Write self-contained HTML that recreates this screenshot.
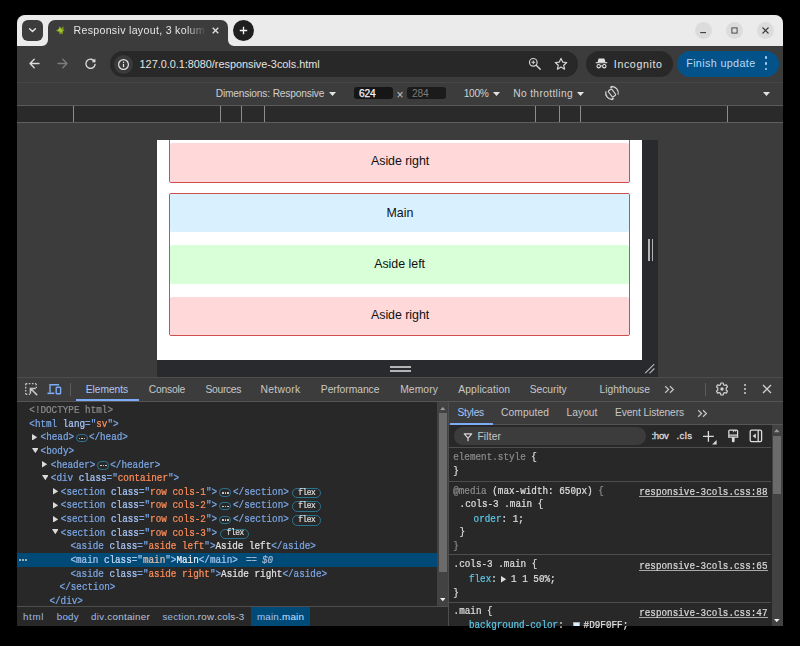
<!DOCTYPE html>
<html lang="en"><head><meta charset="utf-8"><title>Responsiv layout, 3 kolumner</title>
<style>
html,body{margin:0;padding:0;background:#000;}
body{width:800px;height:646px;position:relative;overflow:hidden;font-family:"Liberation Sans", sans-serif;}
#win{position:absolute;left:0;top:0;width:800px;height:646px;}
#win div,#win span,#win svg{position:absolute;}
#win span{white-space:pre;font-kerning:none;}
.s{font-family:"Liberation Sans", sans-serif;}
.m{font-family:"Liberation Mono", monospace;transform:scaleY(1.1);transform-origin:50% 52%;-webkit-text-stroke:0.22px;}
</style></head><body>
<div id="win">
<div style="left:17px;top:15px;width:766px;height:611px;background:#3c3c3c;border-radius:8px 8px 0 0;"></div>
<div style="left:17px;top:15px;width:766px;height:31px;background:#ebebeb;border-radius:8px 8px 0 0;"></div>
<div style="left:22px;top:20px;width:21px;height:21px;background:#3c3c3c;border-radius:6px;"></div>
<svg style="left:27px;top:26px" width="11" height="9" viewBox="0 0 11 9"><path d="M2.6 2.8 L5.5 5.6 L8.4 2.8" fill="none" stroke="#e6e6e6" stroke-width="1.4" stroke-linecap="round" stroke-linejoin="round"/></svg>
<div style="left:48.4px;top:20px;width:179.6px;height:26px;background:#3c3c3c;border-radius:7px 7px 0 0;"></div>
<svg style="left:42.4px;top:40px" width="6" height="6" viewBox="0 0 6 6"><path d="M6 0 V6 H0 A6 6 0 0 0 6 0Z" fill="#3c3c3c"/></svg>
<svg style="left:228px;top:40px" width="6" height="6" viewBox="0 0 6 6"><path d="M0 0 V6 H6 A6 6 0 0 1 0 0Z" fill="#3c3c3c"/></svg>
<svg style="left:54.6px;top:25.4px" width="11" height="11" viewBox="0 0 11 11"><path d="M4.6 0.9 L6.1 3.2 L8.6 1.2 L8.3 4.2 L9.6 5.2 L8 6.4 L7.6 9.4 L5.9 8.6 L4.4 9.6 L4.2 7.2 L0.6 5.3 L3.6 4.4Z" fill="#7d9a1c"/><path d="M4.8 2.6 L6.3 4.4 L7.6 5.6 L6.2 7.4 L4.6 6.2 L2.6 5.2Z" fill="#a9c73a"/></svg>
<svg style="left:211.4px;top:26.1px" width="9" height="9" viewBox="0 0 9 9"><path d="M1.7 1.7 L7.3 7.3 M7.3 1.7 L1.7 7.3" stroke="#e3e3e3" stroke-width="1.25"/></svg>
<div style="left:233px;top:20px;width:21px;height:21px;background:#1f1f1f;border-radius:50%;"></div>
<svg style="left:238.2px;top:25.1px" width="11" height="11" viewBox="0 0 11 11"><path d="M5.5 1.8 V9.2 M1.8 5.5 H9.2" stroke="#f2f2f2" stroke-width="1.35"/></svg>
<div style="left:694.5px;top:22px;width:17px;height:17px;background:#dcdcdc;border-radius:50%;"></div>
<div style="left:725.5px;top:22px;width:17px;height:17px;background:#dcdcdc;border-radius:50%;"></div>
<div style="left:756.5px;top:22px;width:17px;height:17px;background:#dcdcdc;border-radius:50%;"></div>
<svg style="left:699px;top:26px" width="9" height="9" viewBox="0 0 9 9"><path d="M1.2 6.6 H7" stroke="#3a3a3a" stroke-width="1.1"/></svg>
<svg style="left:729.5px;top:26px" width="9" height="9" viewBox="0 0 9 9"><rect x="1.9" y="1.9" width="5.2" height="5.2" fill="none" stroke="#3a3a3a" stroke-width="0.9"/></svg>
<svg style="left:760.5px;top:26px" width="9" height="9" viewBox="0 0 9 9"><path d="M1.5 1.5 L7.5 7.5 M7.5 1.5 L1.5 7.5" stroke="#3a3a3a" stroke-width="1.1"/></svg>
<div style="left:17px;top:46px;width:766px;height:36px;background:#3c3c3c;"></div>
<svg style="left:28px;top:57px" width="13" height="13" viewBox="0 0 13 13"><path d="M11 6.5 H2.2 M6.2 2.2 L2 6.5 L6.2 10.8" fill="none" stroke="#dcdcdc" stroke-width="1.35" stroke-linecap="round" stroke-linejoin="round"/></svg>
<svg style="left:55.5px;top:57px" width="13" height="13" viewBox="0 0 13 13"><path d="M2 6.5 H10.8 M6.8 2.2 L11 6.5 L6.8 10.8" fill="none" stroke="#7d7d7d" stroke-width="1.35" stroke-linecap="round" stroke-linejoin="round"/></svg>
<svg style="left:83.5px;top:57px" width="13" height="13" viewBox="0 0 13 13"><path d="M10.6 4.6 A4.6 4.6 0 1 0 11.1 7.4" fill="none" stroke="#dcdcdc" stroke-width="1.35" stroke-linecap="round"/><path d="M11.4 1.6 V5.2 H7.8Z" fill="#dcdcdc"/></svg>
<div style="left:110px;top:51px;width:468px;height:26px;background:#282828;border-radius:13px;"></div>
<div style="left:113.5px;top:54.5px;width:19px;height:19px;background:#3a3a3a;border-radius:50%;"></div>
<svg style="left:116.5px;top:57.5px" width="13" height="13" viewBox="0 0 13 13"><circle cx="6.5" cy="6.5" r="4.9" fill="none" stroke="#e3e3e3" stroke-width="1.2"/><path d="M6.5 5.9 V9.1" stroke="#e3e3e3" stroke-width="1.2"/><circle cx="6.5" cy="4.2" r="0.75" fill="#e3e3e3"/></svg>
<svg style="left:527px;top:56px" width="15" height="15" viewBox="0 0 15 15"><circle cx="6.3" cy="6.3" r="3.8" fill="none" stroke="#d6d6d6" stroke-width="1.2"/><path d="M9.2 9.2 L13.2 13.2" stroke="#d6d6d6" stroke-width="1.4" stroke-linecap="round"/><path d="M6.3 4.5 V8.1 M4.5 6.3 H8.1" stroke="#d6d6d6" stroke-width="1"/></svg>
<svg style="left:553.5px;top:56.5px" width="14" height="14" viewBox="0 0 14 14"><path d="M7 1.4 L8.7 5.1 L12.7 5.5 L9.7 8.2 L10.6 12.2 L7 10.1 L3.4 12.2 L4.3 8.2 L1.3 5.5 L5.3 5.1Z" fill="none" stroke="#d6d6d6" stroke-width="1.2" stroke-linejoin="round"/></svg>
<div style="left:586px;top:51px;width:87px;height:26px;background:#282828;border-radius:13px;"></div>
<svg style="left:595px;top:57px" width="13" height="13" viewBox="0 0 13 13"><path d="M3.6 1.6 H9.4 L10.4 5 H2.6Z" fill="#e3e3e3"/><path d="M0.8 5.7 H12.2" stroke="#e3e3e3" stroke-width="1.1"/><circle cx="3.7" cy="9.2" r="1.7" fill="none" stroke="#e3e3e3" stroke-width="1.1"/><circle cx="9.3" cy="9.2" r="1.7" fill="none" stroke="#e3e3e3" stroke-width="1.1"/><path d="M5.4 8.9 H7.6" stroke="#e3e3e3" stroke-width="1"/></svg>
<div style="left:677px;top:50.5px;width:101.5px;height:26px;background:#04528a;border-radius:13px;"></div>
<div style="left:764.7px;top:56.300000000000004px;width:2.6px;height:2.6px;background:#a6d3f7;border-radius:50%;"></div>
<div style="left:764.7px;top:62.1px;width:2.6px;height:2.6px;background:#a6d3f7;border-radius:50%;"></div>
<div style="left:764.7px;top:67.9px;width:2.6px;height:2.6px;background:#a6d3f7;border-radius:50%;"></div>
<div style="left:17px;top:82px;width:766px;height:1px;background:#464646;"></div>
<div style="left:17px;top:83px;width:766px;height:22px;background:#3c3c3c;"></div>
<div style="left:354px;top:87.2px;width:39px;height:12.2px;background:#161616;border-radius:3px;"></div>
<div style="left:407px;top:87.2px;width:39px;height:12.2px;background:#1b1b1b;border-radius:3px;"></div>
<svg style="left:329.1px;top:92.3px" width="7" height="4" viewBox="0 0 7 4"><path d="M0 0 H7 L3.5 4Z" fill="#e3e3e3"/></svg>
<svg style="left:493.2px;top:92.3px" width="7" height="4" viewBox="0 0 7 4"><path d="M0 0 H7 L3.5 4Z" fill="#e3e3e3"/></svg>
<svg style="left:577.1px;top:92.3px" width="7" height="4" viewBox="0 0 7 4"><path d="M0 0 H7 L3.5 4Z" fill="#e3e3e3"/></svg>
<svg style="left:762.5px;top:92.3px" width="7" height="4" viewBox="0 0 7 4"><path d="M0 0 H7 L3.5 4Z" fill="#e3e3e3"/></svg>
<svg style="left:604px;top:85.4px" width="16" height="16" viewBox="0 0 16 16"><rect x="5.9" y="4.2" width="4.2" height="7.6" rx="0.9" fill="none" stroke="#d6d6d6" stroke-width="1.15" transform="rotate(-38 8 8)"/><path d="M7.4 1.75 A6.3 6.3 0 0 1 14.1 9.6 M8.6 14.25 A6.3 6.3 0 0 1 1.9 6.4" fill="none" stroke="#d6d6d6" stroke-width="1.25"/><path d="M5.6 2.2 L8.2 0.4 L8.2 3.6Z M10.4 13.8 L7.8 15.6 L7.8 12.4Z" fill="#d6d6d6"/></svg>
<div style="left:17px;top:105px;width:766px;height:1px;background:#5a5a5a;"></div>
<div style="left:17px;top:106px;width:766px;height:16px;background:#2a2a2a;"></div>
<div style="left:72.5px;top:106px;width:1.2px;height:16px;background:#8c8c8c;"></div>
<div style="left:219.5px;top:106px;width:1.2px;height:16px;background:#8c8c8c;"></div>
<div style="left:240.5px;top:106px;width:1.2px;height:16px;background:#8c8c8c;"></div>
<div style="left:263.5px;top:106px;width:1.2px;height:16px;background:#8c8c8c;"></div>
<div style="left:534.5px;top:106px;width:1.2px;height:16px;background:#8c8c8c;"></div>
<div style="left:558.5px;top:106px;width:1.2px;height:16px;background:#8c8c8c;"></div>
<div style="left:579.5px;top:106px;width:1.2px;height:16px;background:#8c8c8c;"></div>
<div style="left:726.5px;top:106px;width:1.2px;height:16px;background:#8c8c8c;"></div>
<div style="left:17px;top:122px;width:766px;height:1px;background:#5e5e5e;"></div>
<div style="left:17px;top:123px;width:766px;height:254px;background:#3c3c3c;"></div>
<div style="left:157px;top:140px;width:501px;height:237px;background:#292a2d;"></div>
<div style="left:648px;top:239px;width:1.8px;height:22px;background:#b4b4b4;"></div>
<div style="left:651.6px;top:239px;width:1.8px;height:22px;background:#b4b4b4;"></div>
<div style="left:389.5px;top:366.4px;width:21.5px;height:1.8px;background:#b4b4b4;"></div>
<div style="left:389.5px;top:370.2px;width:21.5px;height:1.8px;background:#b4b4b4;"></div>
<svg style="left:642px;top:360px" width="16" height="17" viewBox="0 0 16 17"><path d="M3.2 13.2 L12.2 4.2 M7.5 13.4 L12.4 8.5" stroke="#b4b4b4" stroke-width="1.2"/></svg>
<div style="left:157px;top:140px;width:485px;height:220.4px;background:#ffffff;overflow:hidden;"></div>
<div style="left:169px;top:130px;width:461px;height:53px;background:#fff;box-sizing:border-box;border:1px solid #cc4e4e;border-radius:2px;clip-path:inset(10px 0 0 0);"></div>
<div style="left:170px;top:143px;width:459px;height:39px;background:#ffd9d9;border-radius:2px;"></div>
<div style="left:169px;top:193px;width:461px;height:143px;background:#fff;box-sizing:border-box;border:1px solid #cc4e4e;border-radius:2px;"></div>
<div style="left:170px;top:194px;width:459px;height:38.3px;background:#d9f0ff;border-radius:2px;"></div>
<div style="left:170px;top:245.3px;width:459px;height:38.5px;background:#d9ffd9;border-radius:2px;"></div>
<div style="left:170px;top:296.8px;width:459px;height:38.2px;background:#ffd9d9;border-radius:2px;"></div>
<div style="left:17px;top:377px;width:766px;height:249px;background:#282828;"></div>
<div style="left:17px;top:377px;width:766px;height:24px;background:#3c3c3c;"></div>
<div style="left:17px;top:376.6px;width:766px;height:1px;background:#4c4c4c;"></div>
<div style="left:17px;top:400.6px;width:766px;height:1px;background:#555555;"></div>
<div style="left:76px;top:399.4px;width:63px;height:1.7px;background:#7cacf8;"></div>
<svg style="left:24px;top:382px" width="14" height="14" viewBox="0 0 14 14"><path d="M1.7 1.7 H12 M1.7 1.7 V12 " fill="none" stroke="#c7c7c7" stroke-width="1.3" stroke-dasharray="1.6 1.5"/><path d="M12.3 1.7 V6 M1.7 12.3 H6" fill="none" stroke="#c7c7c7" stroke-width="1.3" stroke-dasharray="1.6 1.5"/><path d="M6.4 6.4 H11 M6.4 6.4 V11 M6.6 6.6 L12.6 12.6" fill="none" stroke="#c7c7c7" stroke-width="1.5" stroke-linecap="square"/></svg>
<svg style="left:47px;top:383px" width="15" height="12" viewBox="0 0 15 12"><path d="M3 9.6 V1.7 H12" fill="none" stroke="#7cacf8" stroke-width="1.4"/><path d="M0.5 10.3 H7.3" stroke="#7cacf8" stroke-width="1.6"/><rect x="9.2" y="4.3" width="4.4" height="6.4" rx="0.8" fill="none" stroke="#7cacf8" stroke-width="1.4"/></svg>
<div style="left:69.6px;top:383px;width:1px;height:12.5px;background:#5c5c5c;"></div>
<svg style="left:663.5px;top:384.7px" width="11" height="9" viewBox="0 0 11 9"><path d="M1.2 1.2 L4.6 4.5 L1.2 7.8 M6 1.2 L9.4 4.5 L6 7.8" fill="none" stroke="#c7c7c7" stroke-width="1.2"/></svg>
<div style="left:705px;top:383px;width:1px;height:12.5px;background:#5c5c5c;"></div>
<svg style="left:714.5px;top:382px" width="14" height="14" viewBox="0 0 14 14"><path d="M5.9 1 H8.1 L8.5 2.7 L9.7 3.4 L11.4 2.9 L12.5 4.8 L11.2 6 V8 L12.5 9.2 L11.4 11.1 L9.7 10.6 L8.5 11.3 L8.1 13 H5.9 L5.5 11.3 L4.3 10.6 L2.6 11.1 L1.5 9.2 L2.8 8 V6 L1.5 4.8 L2.6 2.9 L4.3 3.4 L5.5 2.7Z" fill="none" stroke="#d0d0d0" stroke-width="1.2" stroke-linejoin="round"/><circle cx="7" cy="7" r="1.7" fill="#d0d0d0"/></svg>
<div style="left:743.6px;top:384.0px;width:2.4px;height:2.4px;background:#d0d0d0;border-radius:50%;"></div>
<div style="left:743.6px;top:387.90000000000003px;width:2.4px;height:2.4px;background:#d0d0d0;border-radius:50%;"></div>
<div style="left:743.6px;top:391.8px;width:2.4px;height:2.4px;background:#d0d0d0;border-radius:50%;"></div>
<svg style="left:762px;top:384px" width="10" height="10" viewBox="0 0 10 10"><path d="M1 1 L9 9 M9 1 L1 9" stroke="#d0d0d0" stroke-width="1.3"/></svg>
<div style="left:17px;top:553px;width:420.5px;height:13.5px;background:#004a77;"></div>
<div style="left:19.1px;top:559.2px;width:2px;height:2px;background:#d0d0d0;border-radius:50%;"></div>
<div style="left:22.0px;top:559.2px;width:2px;height:2px;background:#d0d0d0;border-radius:50%;"></div>
<div style="left:24.900000000000002px;top:559.2px;width:2px;height:2px;background:#d0d0d0;border-radius:50%;"></div>
<svg style="left:32.4px;top:433.88px" width="5.4" height="6.6" viewBox="0 0 5.4 6.6"><path d="M0 0 V6.6 L5.2 3.3Z" fill="#dadada"/></svg>
<div style="left:75.88000000000001px;top:433.88px;width:12px;height:8.4px;box-sizing:border-box;border:1.1px solid #2b7491;border-radius:4.2px;"></div>
<div style="left:78.78000000000002px;top:437.58px;width:1.6px;height:1.6px;background:#e8e8e8;border-radius:50%;"></div>
<div style="left:81.18000000000002px;top:437.58px;width:1.6px;height:1.6px;background:#e8e8e8;border-radius:50%;"></div>
<div style="left:83.58000000000001px;top:437.58px;width:1.6px;height:1.6px;background:#e8e8e8;border-radius:50%;"></div>
<svg style="left:31.5px;top:447.62px" width="6.6" height="5.4" viewBox="0 0 6.6 5.4"><path d="M0 0 H6.6 L3.3 5.2Z" fill="#dadada"/></svg>
<svg style="left:42.4px;top:461.16px" width="5.4" height="6.6" viewBox="0 0 5.4 6.6"><path d="M0 0 V6.6 L5.2 3.3Z" fill="#dadada"/></svg>
<div style="left:97.24px;top:461.16px;width:12px;height:8.4px;box-sizing:border-box;border:1.1px solid #2b7491;border-radius:4.2px;"></div>
<div style="left:100.14px;top:464.86px;width:1.6px;height:1.6px;background:#e8e8e8;border-radius:50%;"></div>
<div style="left:102.54px;top:464.86px;width:1.6px;height:1.6px;background:#e8e8e8;border-radius:50%;"></div>
<div style="left:104.94px;top:464.86px;width:1.6px;height:1.6px;background:#e8e8e8;border-radius:50%;"></div>
<svg style="left:41.5px;top:474.9px" width="6.6" height="5.4" viewBox="0 0 6.6 5.4"><path d="M0 0 H6.6 L3.3 5.2Z" fill="#dadada"/></svg>
<svg style="left:52.699999999999996px;top:488.44000000000005px" width="5.4" height="6.6" viewBox="0 0 5.4 6.6"><path d="M0 0 V6.6 L5.2 3.3Z" fill="#dadada"/></svg>
<div style="left:219.23999999999998px;top:488.44000000000005px;width:12px;height:8.4px;box-sizing:border-box;border:1.1px solid #2b7491;border-radius:4.2px;"></div>
<div style="left:222.14px;top:492.14000000000004px;width:1.6px;height:1.6px;background:#e8e8e8;border-radius:50%;"></div>
<div style="left:224.54px;top:492.14000000000004px;width:1.6px;height:1.6px;background:#e8e8e8;border-radius:50%;"></div>
<div style="left:226.94px;top:492.14000000000004px;width:1.6px;height:1.6px;background:#e8e8e8;border-radius:50%;"></div>
<div style="left:292.03999999999996px;top:487.74000000000007px;width:29px;height:10.6px;box-sizing:border-box;border:1.1px solid #2b7491;border-radius:5.3px;"></div>
<svg style="left:52.699999999999996px;top:502.08000000000004px" width="5.4" height="6.6" viewBox="0 0 5.4 6.6"><path d="M0 0 V6.6 L5.2 3.3Z" fill="#dadada"/></svg>
<div style="left:219.23999999999998px;top:502.08000000000004px;width:12px;height:8.4px;box-sizing:border-box;border:1.1px solid #2b7491;border-radius:4.2px;"></div>
<div style="left:222.14px;top:505.78000000000003px;width:1.6px;height:1.6px;background:#e8e8e8;border-radius:50%;"></div>
<div style="left:224.54px;top:505.78000000000003px;width:1.6px;height:1.6px;background:#e8e8e8;border-radius:50%;"></div>
<div style="left:226.94px;top:505.78000000000003px;width:1.6px;height:1.6px;background:#e8e8e8;border-radius:50%;"></div>
<div style="left:292.03999999999996px;top:501.38000000000005px;width:29px;height:10.6px;box-sizing:border-box;border:1.1px solid #2b7491;border-radius:5.3px;"></div>
<svg style="left:52.699999999999996px;top:515.72px" width="5.4" height="6.6" viewBox="0 0 5.4 6.6"><path d="M0 0 V6.6 L5.2 3.3Z" fill="#dadada"/></svg>
<div style="left:219.23999999999998px;top:515.7199999999999px;width:12px;height:8.4px;box-sizing:border-box;border:1.1px solid #2b7491;border-radius:4.2px;"></div>
<div style="left:222.14px;top:519.42px;width:1.6px;height:1.6px;background:#e8e8e8;border-radius:50%;"></div>
<div style="left:224.54px;top:519.42px;width:1.6px;height:1.6px;background:#e8e8e8;border-radius:50%;"></div>
<div style="left:226.94px;top:519.42px;width:1.6px;height:1.6px;background:#e8e8e8;border-radius:50%;"></div>
<div style="left:292.03999999999996px;top:515.02px;width:29px;height:10.6px;box-sizing:border-box;border:1.1px solid #2b7491;border-radius:5.3px;"></div>
<svg style="left:51.8px;top:529.46px" width="6.6" height="5.4" viewBox="0 0 6.6 5.4"><path d="M0 0 H6.6 L3.3 5.2Z" fill="#dadada"/></svg>
<div style="left:220.44px;top:528.66px;width:29px;height:10.6px;box-sizing:border-box;border:1.1px solid #2b7491;border-radius:5.3px;"></div>
<div style="left:437.3px;top:401.6px;width:10.9px;height:204.6px;background:#424242;"></div>
<div style="left:438.7px;top:412.7px;width:8.1px;height:159.7px;background:#6b6b6b;"></div>
<svg style="left:439.9px;top:407.29999999999995px" width="5.6" height="3.2" viewBox="0 0 5.6 3.2"><path d="M0 3.2 H5.6 L2.8 0Z" fill="#9a9a9a"/></svg>
<svg style="left:439.9px;top:598.4px" width="5.6" height="3.2" viewBox="0 0 5.6 3.2"><path d="M0 0 H5.6 L2.8 3.2Z" fill="#f0f0f0"/></svg>
<div style="left:17px;top:606px;width:431.2px;height:1px;background:#4e4e4e;"></div>
<div style="left:17px;top:607px;width:431.2px;height:19px;background:#282828;"></div>
<div style="left:250.8px;top:607px;width:59.7px;height:19px;background:#004a77;"></div>
<div style="left:448.2px;top:401.6px;width:1px;height:224.4px;background:#4e4e4e;"></div>
<div style="left:449.2px;top:401.6px;width:333.8px;height:22.6px;background:#3c3c3c;"></div>
<div style="left:449.2px;top:424.2px;width:333.8px;height:1px;background:#555555;"></div>
<div style="left:449.5px;top:423.1px;width:43px;height:1.7px;background:#7cacf8;"></div>
<svg style="left:696.5px;top:408.8px" width="11" height="9" viewBox="0 0 11 9"><path d="M1.2 1.2 L4.6 4.5 L1.2 7.8 M6 1.2 L9.4 4.5 L6 7.8" fill="none" stroke="#c7c7c7" stroke-width="1.2"/></svg>
<div style="left:449.2px;top:425.2px;width:322.3px;height:21.8px;background:#282828;"></div>
<div style="left:453.5px;top:427.1px;width:192px;height:17.6px;background:#3c3c3c;border-radius:8.8px;"></div>
<svg style="left:462.7px;top:431.6px" width="10" height="10" viewBox="0 0 10 10"><path d="M1.3 1.8 H8.7 L5 6.2Z M5 6 V9.2" fill="none" stroke="#d6d6d6" stroke-width="1.2" stroke-linejoin="round"/></svg>
<svg style="left:702px;top:429.5px" width="15" height="15" viewBox="0 0 15 15"><path d="M6.4 0.9 V11.7 M1 6.3 H11.8" stroke="#dcdcdc" stroke-width="1.3"/><path d="M14.6 9.9 V14.4 H10.1Z" fill="#dcdcdc"/></svg>
<svg style="left:726.5px;top:429px" width="13" height="14" viewBox="0 0 13 14"><rect x="1.8" y="1" width="8.8" height="5" rx="1" fill="none" stroke="#dcdcdc" stroke-width="1.25"/><path d="M6.6 1 V3.2 M8.6 1 V2.6" stroke="#dcdcdc" stroke-width="0.9"/><path d="M1.8 6 V8 H10.6 V6" fill="none" stroke="#dcdcdc" stroke-width="1.25"/><rect x="4.9" y="8" width="2.7" height="5.2" rx="0.9" fill="#dcdcdc"/></svg>
<svg style="left:749px;top:428.8px" width="14" height="14" viewBox="0 0 14 14"><rect x="1.2" y="1.2" width="11.4" height="11.4" rx="1.4" fill="none" stroke="#dcdcdc" stroke-width="1.3"/><path d="M9.2 1.2 V12.6" stroke="#dcdcdc" stroke-width="1.3"/><path d="M6.8 4.6 V9.4 L3.6 7Z" fill="#dcdcdc"/></svg>
<div style="left:449.2px;top:447px;width:322.3px;height:1px;background:#4e4e4e;"></div>
<div style="left:771.5px;top:425.2px;width:11.5px;height:200.8px;background:#424242;"></div>
<div style="left:773px;top:436px;width:8.3px;height:58.4px;background:#6b6b6b;"></div>
<svg style="left:774.4000000000001px;top:429.4px" width="5.6" height="3.2" viewBox="0 0 5.6 3.2"><path d="M0 3.2 H5.6 L2.8 0Z" fill="#9a9a9a"/></svg>
<svg style="left:774.4000000000001px;top:619.1px" width="5.6" height="3.2" viewBox="0 0 5.6 3.2"><path d="M0 0 H5.6 L2.8 3.2Z" fill="#f0f0f0"/></svg>
<div style="left:449.2px;top:481px;width:322.3px;height:1px;background:#4e4e4e;"></div>
<div style="left:449.2px;top:554.4px;width:322.3px;height:1px;background:#4e4e4e;"></div>
<svg style="left:501.2px;top:576.3000000000001px" width="5.4" height="6.6" viewBox="0 0 5.4 6.6"><path d="M0 0 V6.6 L5.2 3.3Z" fill="#dedede"/></svg>
<div style="left:449.2px;top:601.6px;width:322.3px;height:1px;background:#4e4e4e;"></div>
<div style="left:573px;top:621.8px;width:7px;height:7px;background:#d9f0ff;box-sizing:border-box;border:0.6px solid #aaa;"></div>
<div style="left:639.2px;top:496.09999999999997px;width:128.4px;height:0.9px;background:#a8a8a8;"></div>
<div style="left:639.2px;top:569.9px;width:128.4px;height:0.9px;background:#a8a8a8;"></div>
<div style="left:639.2px;top:617.0px;width:128.4px;height:0.9px;background:#a8a8a8;"></div>
<div style="left:0px;top:626px;width:800px;height:20px;background:#000;"></div>
<span class="s" style="left:371px;top:153.20px;font-size:12.4px;line-height:17px;color:#111111;letter-spacing:-0.032px;">Aside right</span>
<span class="s" style="left:386.5px;top:204.50px;font-size:12.4px;line-height:17px;color:#111111;letter-spacing:0.035px;">Main</span>
<span class="s" style="left:374.2px;top:255.90px;font-size:12.4px;line-height:17px;color:#111111;letter-spacing:-0.017px;">Aside left</span>
<span class="s" style="left:371px;top:307.30px;font-size:12.4px;line-height:17px;color:#111111;letter-spacing:-0.032px;">Aside right</span>
<span class="s" style="left:85.8px;top:382.50px;font-size:10.3px;line-height:14px;color:#a8c7fa;letter-spacing:-0.092px;">Elements</span>
<span class="s" style="left:148.8px;top:382.50px;font-size:10.3px;line-height:14px;color:#c7c7c7;letter-spacing:-0.226px;">Console</span>
<span class="s" style="left:205.6px;top:382.50px;font-size:10.3px;line-height:14px;color:#c7c7c7;letter-spacing:-0.340px;">Sources</span>
<span class="s" style="left:260.6px;top:382.50px;font-size:10.3px;line-height:14px;color:#c7c7c7;letter-spacing:0.305px;">Network</span>
<span class="s" style="left:320.8px;top:382.50px;font-size:10.3px;line-height:14px;color:#c7c7c7;letter-spacing:-0.032px;">Performance</span>
<span class="s" style="left:400.2px;top:382.50px;font-size:10.3px;line-height:14px;color:#c7c7c7;letter-spacing:0.102px;">Memory</span>
<span class="s" style="left:458.2px;top:382.50px;font-size:10.3px;line-height:14px;color:#c7c7c7;letter-spacing:0.148px;">Application</span>
<span class="s" style="left:529.7px;top:382.50px;font-size:10.3px;line-height:14px;color:#c7c7c7;letter-spacing:-0.038px;">Security</span>
<span class="s" style="left:599.6px;top:382.50px;font-size:10.3px;line-height:14px;color:#c7c7c7;">Lighthouse</span>
<span class="s" style="left:73.5px;top:22.90px;font-size:10.6px;line-height:15px;color:#e6e6e6;letter-spacing:0.310px;width:133px;overflow:hidden;-webkit-mask-image:linear-gradient(90deg,#000 84%,transparent 100%);mask-image:linear-gradient(90deg,#000 84%,transparent 100%);">Responsiv layout, 3 kolum</span>
<span class="s" style="left:139.6px;top:56.50px;font-size:10.9px;line-height:15px;color:#e3e3e3;letter-spacing:-0.028px;">127.0.0.1:8080/responsive-3cols.html</span>
<span class="s" style="left:613.8px;top:56.50px;font-size:10.6px;line-height:15px;color:#e3e3e3;letter-spacing:0.644px;">Incognito</span>
<span class="s" style="left:686.2px;top:56.30px;font-size:10.8px;line-height:15px;color:#b5dbf8;letter-spacing:0.344px;">Finish update</span>
<span class="s" style="left:215.7px;top:86.60px;font-size:10.2px;line-height:14px;color:#d0d0d0;letter-spacing:-0.160px;">Dimensions: Responsive</span>
<span class="s" style="left:359px;top:86.70px;font-size:10.2px;line-height:14px;color:#f4f4f4;letter-spacing:-0.167px;-webkit-text-stroke:0.25px;">624</span>
<span class="s" style="left:396.6px;top:87.20px;font-size:12px;line-height:17px;color:#c4c4c4;">×</span>
<span class="s" style="left:412px;top:86.70px;font-size:10.2px;line-height:14px;color:#7c7c7c;letter-spacing:-0.167px;">284</span>
<span class="s" style="left:463.7px;top:86.70px;font-size:10.2px;line-height:14px;color:#d0d0d0;letter-spacing:-0.316px;">100%</span>
<span class="s" style="left:513.2px;top:86.60px;font-size:10.2px;line-height:14px;color:#d0d0d0;letter-spacing:0.374px;">No throttling</span>
<span class="m" style="left:29.3px;top:404.00px;font-size:9.3px;line-height:13px;color:#8a8a8a;">&lt;!DOCTYPE html&gt;</span>
<span class="m" style="left:29.3px;top:417.64px;font-size:9.3px;line-height:13px;color:#7ba7e6;">&lt;html</span>
<span class="m" style="left:62.78px;top:417.64px;font-size:9.3px;line-height:13px;color:#a8c7fa;">lang</span>
<span class="m" style="left:85.1px;top:417.64px;font-size:9.3px;line-height:13px;color:#7ba7e6;letter-spacing:-0.006px;">=&quot;</span>
<span class="m" style="left:96.26px;top:417.64px;font-size:9.3px;line-height:13px;color:#fe8d59;letter-spacing:-0.006px;">sv</span>
<span class="m" style="left:107.42px;top:417.64px;font-size:9.3px;line-height:13px;color:#7ba7e6;letter-spacing:-0.006px;">&quot;&gt;</span>
<span class="m" style="left:40.6px;top:431.28px;font-size:9.3px;line-height:13px;color:#7ba7e6;">&lt;head&gt;</span>
<span class="m" style="left:88.88px;top:431.28px;font-size:9.3px;line-height:13px;color:#7ba7e6;">&lt;/head&gt;</span>
<span class="m" style="left:40.6px;top:444.92px;font-size:9.3px;line-height:13px;color:#7ba7e6;">&lt;body&gt;</span>
<span class="m" style="left:50.8px;top:458.56px;font-size:9.3px;line-height:13px;color:#7ba7e6;">&lt;header&gt;</span>
<span class="m" style="left:110.24px;top:458.56px;font-size:9.3px;line-height:13px;color:#7ba7e6;">&lt;/header&gt;</span>
<span class="m" style="left:50.8px;top:472.20px;font-size:9.3px;line-height:13px;color:#7ba7e6;">&lt;div</span>
<span class="m" style="left:78.7px;top:472.20px;font-size:9.3px;line-height:13px;color:#a8c7fa;">class</span>
<span class="m" style="left:106.6px;top:472.20px;font-size:9.3px;line-height:13px;color:#7ba7e6;letter-spacing:-0.006px;">=&quot;</span>
<span class="m" style="left:117.76px;top:472.20px;font-size:9.3px;line-height:13px;color:#fe8d59;">container</span>
<span class="m" style="left:167.98px;top:472.20px;font-size:9.3px;line-height:13px;color:#7ba7e6;letter-spacing:-0.006px;">&quot;&gt;</span>
<span class="m" style="left:60.8px;top:485.84px;font-size:9.3px;line-height:13px;color:#7ba7e6;">&lt;section</span>
<span class="m" style="left:111.02px;top:485.84px;font-size:9.3px;line-height:13px;color:#a8c7fa;">class</span>
<span class="m" style="left:138.92px;top:485.84px;font-size:9.3px;line-height:13px;color:#7ba7e6;letter-spacing:-0.006px;">=&quot;</span>
<span class="m" style="left:150.08px;top:485.84px;font-size:9.3px;line-height:13px;color:#fe8d59;">row cols-1</span>
<span class="m" style="left:205.88px;top:485.84px;font-size:9.3px;line-height:13px;color:#7ba7e6;letter-spacing:-0.006px;">&quot;&gt;</span>
<span class="m" style="left:233.04px;top:485.84px;font-size:9.3px;line-height:13px;color:#7ba7e6;">&lt;/section&gt;</span>
<span class="m" style="left:298.34px;top:487.54px;font-size:7.8px;line-height:11px;color:#dcdcdc;letter-spacing:-0.430px;">flex</span>
<span class="m" style="left:60.8px;top:499.48px;font-size:9.3px;line-height:13px;color:#7ba7e6;">&lt;section</span>
<span class="m" style="left:111.02px;top:499.48px;font-size:9.3px;line-height:13px;color:#a8c7fa;">class</span>
<span class="m" style="left:138.92px;top:499.48px;font-size:9.3px;line-height:13px;color:#7ba7e6;letter-spacing:-0.006px;">=&quot;</span>
<span class="m" style="left:150.08px;top:499.48px;font-size:9.3px;line-height:13px;color:#fe8d59;">row cols-2</span>
<span class="m" style="left:205.88px;top:499.48px;font-size:9.3px;line-height:13px;color:#7ba7e6;letter-spacing:-0.006px;">&quot;&gt;</span>
<span class="m" style="left:233.04px;top:499.48px;font-size:9.3px;line-height:13px;color:#7ba7e6;">&lt;/section&gt;</span>
<span class="m" style="left:298.34px;top:501.18px;font-size:7.8px;line-height:11px;color:#dcdcdc;letter-spacing:-0.430px;">flex</span>
<span class="m" style="left:60.8px;top:513.12px;font-size:9.3px;line-height:13px;color:#7ba7e6;">&lt;section</span>
<span class="m" style="left:111.02px;top:513.12px;font-size:9.3px;line-height:13px;color:#a8c7fa;">class</span>
<span class="m" style="left:138.92px;top:513.12px;font-size:9.3px;line-height:13px;color:#7ba7e6;letter-spacing:-0.006px;">=&quot;</span>
<span class="m" style="left:150.08px;top:513.12px;font-size:9.3px;line-height:13px;color:#fe8d59;">row cols-2</span>
<span class="m" style="left:205.88px;top:513.12px;font-size:9.3px;line-height:13px;color:#7ba7e6;letter-spacing:-0.006px;">&quot;&gt;</span>
<span class="m" style="left:233.04px;top:513.12px;font-size:9.3px;line-height:13px;color:#7ba7e6;">&lt;/section&gt;</span>
<span class="m" style="left:298.34px;top:514.82px;font-size:7.8px;line-height:11px;color:#dcdcdc;letter-spacing:-0.430px;">flex</span>
<span class="m" style="left:60.8px;top:526.76px;font-size:9.3px;line-height:13px;color:#7ba7e6;">&lt;section</span>
<span class="m" style="left:111.02px;top:526.76px;font-size:9.3px;line-height:13px;color:#a8c7fa;">class</span>
<span class="m" style="left:138.92px;top:526.76px;font-size:9.3px;line-height:13px;color:#7ba7e6;letter-spacing:-0.006px;">=&quot;</span>
<span class="m" style="left:150.08px;top:526.76px;font-size:9.3px;line-height:13px;color:#fe8d59;">row cols-3</span>
<span class="m" style="left:205.88px;top:526.76px;font-size:9.3px;line-height:13px;color:#7ba7e6;letter-spacing:-0.006px;">&quot;&gt;</span>
<span class="m" style="left:226.74px;top:528.46px;font-size:7.8px;line-height:11px;color:#dcdcdc;letter-spacing:-0.430px;">flex</span>
<span class="m" style="left:70.4px;top:540.40px;font-size:9.3px;line-height:13px;color:#7ba7e6;">&lt;aside</span>
<span class="m" style="left:109.46px;top:540.40px;font-size:9.3px;line-height:13px;color:#a8c7fa;">class</span>
<span class="m" style="left:137.36px;top:540.40px;font-size:9.3px;line-height:13px;color:#7ba7e6;letter-spacing:-0.006px;">=&quot;</span>
<span class="m" style="left:148.52px;top:540.40px;font-size:9.3px;line-height:13px;color:#fe8d59;">aside left</span>
<span class="m" style="left:204.32px;top:540.40px;font-size:9.3px;line-height:13px;color:#7ba7e6;letter-spacing:-0.006px;">&quot;&gt;</span>
<span class="m" style="left:215.48px;top:540.40px;font-size:9.3px;line-height:13px;color:#e3e3e3;">Aside left</span>
<span class="m" style="left:271.28px;top:540.40px;font-size:9.3px;line-height:13px;color:#7ba7e6;">&lt;/aside&gt;</span>
<span class="m" style="left:70.4px;top:554.04px;font-size:9.3px;line-height:13px;color:#a3c5f0;">&lt;main</span>
<span class="m" style="left:103.88px;top:554.04px;font-size:9.3px;line-height:13px;color:#c6dcf8;">class</span>
<span class="m" style="left:131.78px;top:554.04px;font-size:9.3px;line-height:13px;color:#a3c5f0;letter-spacing:-0.006px;">=&quot;</span>
<span class="m" style="left:142.94px;top:554.04px;font-size:9.3px;line-height:13px;color:#e3bba6;">main</span>
<span class="m" style="left:165.26px;top:554.04px;font-size:9.3px;line-height:13px;color:#a3c5f0;letter-spacing:-0.006px;">&quot;&gt;</span>
<span class="m" style="left:176.42px;top:554.04px;font-size:9.3px;line-height:13px;color:#f2f2f2;">Main</span>
<span class="m" style="left:198.74px;top:554.04px;font-size:9.3px;line-height:13px;color:#a3c5f0;">&lt;/main&gt;</span>
<span class="m" style="left:245.89999999999998px;top:554.04px;font-size:9.3px;line-height:13px;color:#9db6cf;letter-spacing:-0.181px;font-style:italic;">== $0</span>
<span class="m" style="left:70.4px;top:567.68px;font-size:9.3px;line-height:13px;color:#7ba7e6;">&lt;aside</span>
<span class="m" style="left:109.46px;top:567.68px;font-size:9.3px;line-height:13px;color:#a8c7fa;">class</span>
<span class="m" style="left:137.36px;top:567.68px;font-size:9.3px;line-height:13px;color:#7ba7e6;letter-spacing:-0.006px;">=&quot;</span>
<span class="m" style="left:148.52px;top:567.68px;font-size:9.3px;line-height:13px;color:#fe8d59;">aside right</span>
<span class="m" style="left:209.9px;top:567.68px;font-size:9.3px;line-height:13px;color:#7ba7e6;letter-spacing:-0.006px;">&quot;&gt;</span>
<span class="m" style="left:221.06px;top:567.68px;font-size:9.3px;line-height:13px;color:#e3e3e3;">Aside right</span>
<span class="m" style="left:282.44px;top:567.68px;font-size:9.3px;line-height:13px;color:#7ba7e6;">&lt;/aside&gt;</span>
<span class="m" style="left:59.6px;top:581.32px;font-size:9.3px;line-height:13px;color:#7ba7e6;">&lt;/section&gt;</span>
<span class="m" style="left:49.4px;top:594.96px;font-size:9.3px;line-height:13px;color:#7ba7e6;">&lt;/div&gt;</span>
<span class="s" style="left:23px;top:609.70px;font-size:9.8px;line-height:14px;color:#9bb9e6;letter-spacing:0.621px;">html</span>
<span class="s" style="left:56.8px;top:609.70px;font-size:9.8px;line-height:14px;color:#9bb9e6;letter-spacing:0.188px;">body</span>
<span class="s" style="left:91px;top:609.70px;font-size:9.8px;line-height:14px;color:#9bb9e6;letter-spacing:0.264px;">div<i style="color:#b9c3d3;font-style:normal">.container</i></span>
<span class="s" style="left:162.5px;top:609.70px;font-size:9.8px;line-height:14px;color:#9bb9e6;letter-spacing:0.199px;">section<i style="color:#b9c3d3;font-style:normal">.row.cols-3</i></span>
<span class="s" style="left:256.9px;top:609.70px;font-size:9.8px;line-height:14px;color:#a8c7fa;letter-spacing:0.231px;">main<i style="color:#d3e3fd;font-style:normal">.main</i></span>
<span class="s" style="left:457.5px;top:406.40px;font-size:10.2px;line-height:14px;color:#a8c7fa;letter-spacing:-0.208px;">Styles</span>
<span class="s" style="left:501px;top:406.40px;font-size:10.2px;line-height:14px;color:#c7c7c7;letter-spacing:0.123px;">Computed</span>
<span class="s" style="left:566.5px;top:406.40px;font-size:10.2px;line-height:14px;color:#c7c7c7;letter-spacing:0.068px;">Layout</span>
<span class="s" style="left:615px;top:406.40px;font-size:10.2px;line-height:14px;color:#c7c7c7;letter-spacing:-0.081px;">Event Listeners</span>
<span class="s" style="left:477.5px;top:429.90px;font-size:10.2px;line-height:14px;color:#c7c7c7;letter-spacing:0.143px;">Filter</span>
<span class="s" style="left:651.4px;top:429.10px;font-size:9.6px;line-height:13px;color:#dcdcdc;letter-spacing:-0.235px;-webkit-text-stroke:0.3px;">:hov</span>
<span class="s" style="left:676.4px;top:429.10px;font-size:9.6px;line-height:13px;color:#dcdcdc;letter-spacing:0.452px;-webkit-text-stroke:0.3px;">.cls</span>
<span class="m" style="left:453.2px;top:450.90px;font-size:9.3px;line-height:13px;color:#8a8a8a;">element.style</span>
<span class="m" style="left:531.32px;top:450.90px;font-size:9.3px;line-height:13px;color:#dedede;letter-spacing:-0.014px;">{</span>
<span class="m" style="left:453.2px;top:464.50px;font-size:9.3px;line-height:13px;color:#dedede;letter-spacing:-0.014px;">}</span>
<span class="m" style="left:453.2px;top:484.50px;font-size:9.3px;line-height:13px;color:#8a8a8a;">@media</span>
<span class="m" style="left:492.26px;top:484.50px;font-size:9.3px;line-height:13px;color:#dedede;">(max-width:</span>
<span class="m" style="left:559.22px;top:484.50px;font-size:9.3px;line-height:13px;color:#dedede;">650px)</span>
<span class="m" style="left:598.28px;top:484.50px;font-size:9.3px;line-height:13px;color:#8a8a8a;letter-spacing:-0.014px;">{</span>
<span class="m" style="left:459.6px;top:497.90px;font-size:9.3px;line-height:13px;color:#dedede;">.cols-3</span>
<span class="m" style="left:504.24px;top:497.90px;font-size:9.3px;line-height:13px;color:#dedede;">.main</span>
<span class="m" style="left:537.72px;top:497.90px;font-size:9.3px;line-height:13px;color:#dedede;letter-spacing:-0.014px;">{</span>
<span class="m" style="left:473.6px;top:513.10px;font-size:9.3px;line-height:13px;color:#5cc6e6;">order</span>
<span class="m" style="left:501.5px;top:513.10px;font-size:9.3px;line-height:13px;color:#dedede;letter-spacing:-0.014px;">:</span>
<span class="m" style="left:512.66px;top:513.10px;font-size:9.3px;line-height:13px;color:#dedede;letter-spacing:-0.006px;">1;</span>
<span class="m" style="left:459.4px;top:526.10px;font-size:9.3px;line-height:13px;color:#dedede;letter-spacing:-0.014px;">}</span>
<span class="m" style="left:453.2px;top:539.50px;font-size:9.3px;line-height:13px;color:#8a8a8a;letter-spacing:-0.014px;">}</span>
<span class="m" style="left:453.6px;top:557.50px;font-size:9.3px;line-height:13px;color:#dedede;">.cols-3</span>
<span class="m" style="left:498.24px;top:557.50px;font-size:9.3px;line-height:13px;color:#dedede;">.main</span>
<span class="m" style="left:531.72px;top:557.50px;font-size:9.3px;line-height:13px;color:#dedede;letter-spacing:-0.014px;">{</span>
<span class="m" style="left:468.9px;top:573.10px;font-size:9.3px;line-height:13px;color:#5cc6e6;">flex</span>
<span class="m" style="left:491.22px;top:573.10px;font-size:9.3px;line-height:13px;color:#dedede;letter-spacing:-0.014px;">:</span>
<span class="m" style="left:511px;top:573.10px;font-size:9.3px;line-height:13px;color:#dedede;letter-spacing:-0.014px;">1</span>
<span class="m" style="left:522.16px;top:573.10px;font-size:9.3px;line-height:13px;color:#dedede;letter-spacing:-0.014px;">1</span>
<span class="m" style="left:533.32px;top:573.10px;font-size:9.3px;line-height:13px;color:#dedede;">50%;</span>
<span class="m" style="left:453.2px;top:587.10px;font-size:9.3px;line-height:13px;color:#dedede;letter-spacing:-0.014px;">}</span>
<span class="m" style="left:453.6px;top:604.70px;font-size:9.3px;line-height:13px;color:#dedede;">.main</span>
<span class="m" style="left:487.08px;top:604.70px;font-size:9.3px;line-height:13px;color:#dedede;letter-spacing:-0.014px;">{</span>
<span class="m" style="left:468.9px;top:619.20px;font-size:9.3px;line-height:13px;color:#5cc6e6;">background-color</span>
<span class="m" style="left:558.18px;top:619.20px;font-size:9.3px;line-height:13px;color:#dedede;letter-spacing:-0.014px;">:</span>
<span class="m" style="left:583.6px;top:619.20px;font-size:9.3px;line-height:13px;color:#dedede;">#D9F0FF;</span>
<span class="m" style="left:639.2px;top:485.70px;font-size:9.3px;line-height:13px;color:#d6d6d6;">responsive-3cols.css:88</span>
<span class="m" style="left:639.2px;top:559.50px;font-size:9.3px;line-height:13px;color:#d6d6d6;">responsive-3cols.css:65</span>
<span class="m" style="left:639.2px;top:606.60px;font-size:9.3px;line-height:13px;color:#d6d6d6;">responsive-3cols.css:47</span>
</div>
</body></html>
